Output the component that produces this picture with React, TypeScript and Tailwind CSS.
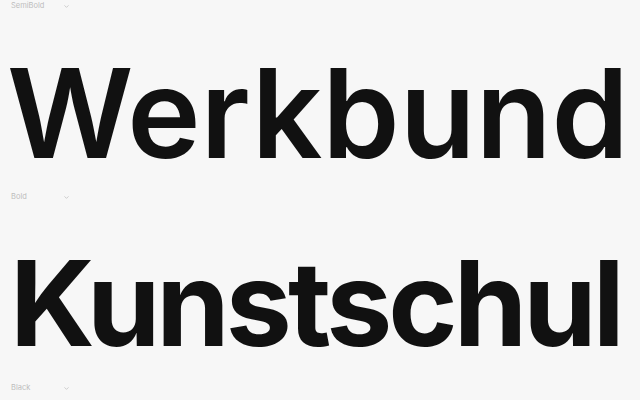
import { ChevronDown } from "lucide-react";

const rows = [
  {
    label: "SemiBold",
    word: "Werkbund",
    cls: "pt-[39px] pl-[7px] text-[124px] leading-[124px] tracking-[0px] font-semibold",
  },
  {
    label: "Bold",
    word: "Kunstschul",
    cls: "pt-[41px] pl-[10px] text-[118px] leading-[118px] tracking-[-4px] font-bold",
  },
];

function Label({ text }: { text: string }) {
  return (
    <div className="flex items-center h-[12px] pl-[11px] text-[7.5px] text-[#bdbdbd]">
      <span className="w-[52px]">{text}</span>
      <ChevronDown size={7} strokeWidth={2} className="text-[#b0b0b0]" />
    </div>
  );
}

export default function App() {
  return (
    <div className="w-[640px] h-[400px] overflow-hidden bg-[#f7f7f7] font-['Inter',sans-serif] text-[#111111]">
      {rows.map((r) => (
        <div key={r.label} className="h-[191px] flex flex-col">
          <Label text={r.label} />
          <div className={`whitespace-nowrap ${r.cls}`}>{r.word}</div>
        </div>
      ))}
      <Label text="Black" />
    </div>
  );
}
